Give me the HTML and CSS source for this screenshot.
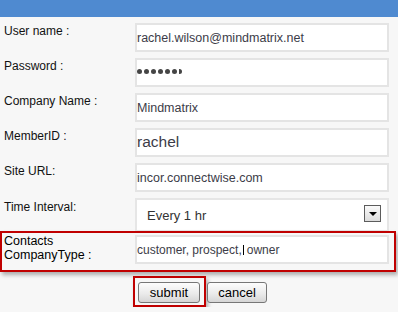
FILE: index.html
```html
<!DOCTYPE html>
<html lang="en">
<head>
	<meta charset="UTF-8">
	<title>Settings</title>
	<link rel="stylesheet" href="styles.css">
</head>
<body>
	<div class="header"></div>
	<form class="settings" action="">
		<div class="row">
			<label>User name :</label>
			<div class="field">rachel.wilson@mindmatrix.net</div>
		</div>
		<div class="row">
			<label>Password :</label>
			<div class="field dots">
				<i></i><i></i><i></i><i></i><i></i><i></i><i class="half"></i>
			</div>
		</div>
		<div class="row">
			<label>Company Name :</label>
			<div class="field">Mindmatrix</div>
		</div>
		<div class="row">
			<label>MemberID :</label>
			<div class="field big">rachel</div>
		</div>
		<div class="row">
			<label>Site URL:</label>
			<div class="field">incor.connectwise.com</div>
		</div>
		<div class="row row-select">
			<label>Time Interval:</label>
			<div class="select">
				<span>Every 1 hr</span>
				<span class="arrow"></span>
			</div>
		</div>
		<div class="row row-mark">
			<label>Contacts<br>CompanyType :</label>
			<div class="field small">customer, prospect,<i class="caret"></i>owner</div>
		</div>
		<div class="actions">
			<span class="mark"><button type="button">submit</button></span>
			<button type="button" class="cancel">cancel</button>
		</div>
	</form>
</body>
</html>
```

FILE: styles.css
```css
/*common*/
*{
	margin: 0;
	padding: 0;
}
body{
	background-color: #f7f7f7;
	font-family: "Liberation Sans", Arial, sans-serif;
	font-size: 12px;
	color: #111;
}
.header{
	height: 17px;
	background-color: #4f8ad0;
}

/*form*/
.settings{
	display: flex;
	flex-direction: column;
	gap: 6px;
	padding-top: 6px;
}
.row{
	display: flex;
	height: 29px;
}
.row label{
	width: 135px;
	box-sizing: border-box;
	padding: 1px 0 0 4px;
	line-height: 14px;
}
.field{
	width: 254px;
	height: 29px;
	box-sizing: border-box;
	border: 2px solid #e4e4e4;
	background-color: #fff;
	padding-top: 2px;
	font-size: 12.5px;
	line-height: 23px;
	color: #3c3c48;
	white-space: nowrap;
}
.field.big{
	font-size: 15.5px;
	padding-top: 1px;
	line-height: 21px;
}
.field.small{
	font-size: 12px;
}
.dots{
	display: flex;
	align-items: center;
	gap: 2px;
	padding-top: 0;
	padding-bottom: 2px;
}
.dots i{
	width: 5px;
	height: 5px;
	border-radius: 50%;
	background-color: #454545;
}
.dots i.half{
	width: 3px;
	border-radius: 0 3px 3px 0;
}

/*select*/
.row-select{
	height: 34px;
}
.row-select label{
	padding-top: 2px;
}
.select{
	width: 254px;
	height: 34px;
	box-sizing: border-box;
	border: 2px solid #e6e6e6;
	background-color: #fff;
	display: flex;
	align-items: center;
	justify-content: space-between;
	padding: 0 6px 0 10px;
	font-size: 13px;
	color: #333;
}
.select .arrow{
	width: 17px;
	height: 17px;
	box-sizing: border-box;
	border: 1px solid #5c5c5c;
	background: linear-gradient(#fafafa, #dcdcdc);
	margin-bottom: 3px;
	display: flex;
	align-items: center;
	justify-content: center;
}
.select .arrow::after{
	content: "";
	border-left: 4px solid transparent;
	border-right: 4px solid transparent;
	border-top: 4px solid #000;
	margin-top: 1px;
}

/*marked rows*/
.row-mark{
	height: auto;
	width: 396px;
	box-sizing: border-box;
	margin-top: -7px;
	border: 2px solid #c00000;
	padding: 2px 0 6px 2px;
	background-color: #f7f7f7;
	box-shadow: 2px 3px 4px rgba(0, 0, 0, 0.3);
}
.row-mark label{
	width: 131px;
	padding: 0;
	margin-top: -1px;
	font-size: 12.5px;
	color: #000;
}
.caret{
	display: inline-block;
	width: 1px;
	height: 10px;
	background-color: #000;
	margin: 0 3px 0 1px;
	vertical-align: -1px;
}

/*buttons*/
.actions{
	display: flex;
	align-items: flex-start;
	padding-left: 133px;
	margin-top: -2px;
}
.mark{
	display: flex;
	border: 2px solid #c00000;
	padding: 4px 4px 2px 3px;
	box-shadow: 2px 3px 4px rgba(0, 0, 0, 0.3);
}
.actions button{
	width: 62px;
	height: 21px;
	border: 1px solid #777;
	border-radius: 3px;
	background: linear-gradient(#fdfdfd, #ebebeb 55%, #d6d6d6);
	font-family: "Liberation Sans", Arial, sans-serif;
	font-size: 13px;
	color: #000;
}
.actions .cancel{
	width: 60px;
	margin: 6px 0 0 1px;
}
```
